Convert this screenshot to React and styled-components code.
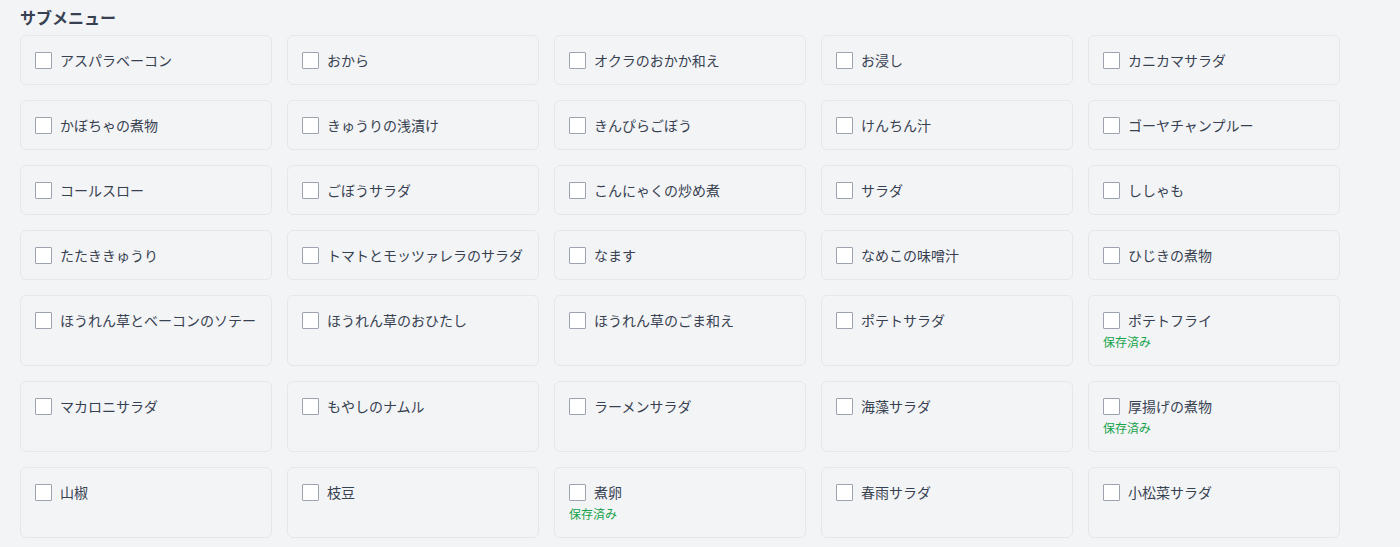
import React from "react";
import styled, { createGlobalStyle } from "styled-components";

const GlobalStyle = createGlobalStyle`
  body {
    margin: 0;
    background: #f3f4f6;
    font-family: "Noto Sans CJK JP", "Noto Sans", sans-serif;
    color: #374151;
  }
`;

const items = [
  ["アスパラベーコン"],
  ["おから"],
  ["オクラのおかか和え"],
  ["お浸し"],
  ["カニカマサラダ"],
  ["かぼちゃの煮物"],
  ["きゅうりの浅漬け"],
  ["きんぴらごぼう"],
  ["けんちん汁"],
  ["ゴーヤチャンプルー"],
  ["コールスロー"],
  ["ごぼうサラダ"],
  ["こんにゃくの炒め煮"],
  ["サラダ"],
  ["ししゃも"],
  ["たたききゅうり"],
  ["トマトとモッツァレラのサラダ"],
  ["なます"],
  ["なめこの味噌汁"],
  ["ひじきの煮物"],
  ["ほうれん草とベーコンのソテー"],
  ["ほうれん草のおひたし"],
  ["ほうれん草のごま和え"],
  ["ポテトサラダ"],
  ["ポテトフライ", true],
  ["マカロニサラダ"],
  ["もやしのナムル"],
  ["ラーメンサラダ"],
  ["海藻サラダ"],
  ["厚揚げの煮物", true],
  ["山椒"],
  ["枝豆"],
  ["煮卵", true],
  ["春雨サラダ"],
  ["小松菜サラダ"],
];

function App() {
  return (
    <>
      <GlobalStyle />
      <Page>
        <Title>サブメニュー</Title>
        <Grid>
          {items.map(([name, saved]) => (
            <Card key={name}>
              <Row>
                <Box type="checkbox" />
                <Name>{name}</Name>
              </Row>
              {saved && <Saved>保存済み</Saved>}
            </Card>
          ))}
        </Grid>
      </Page>
    </>
  );
}

export default App;

const Page = styled.div`
  padding: 5px 20px 8px;
  width: 1320px;
`;

const Title = styled.h2`
  margin: 0 0 6px;
  font-size: 16px;
  line-height: 24px;
  font-weight: 700;
  color: #374151;
`;

const Grid = styled.div`
  display: grid;
  grid-template-columns: repeat(5, 1fr);
  gap: 15px;
`;

const Card = styled.label`
  display: flex;
  flex-direction: column;
  border: 1px solid #e5e7eb;
  border-radius: 6px;
  padding: 15px 14px;
  min-height: 18px;
  cursor: pointer;
`;

const Row = styled.div`
  display: flex;
  align-items: center;
  gap: 8px;
  height: 18px;
`;

const Box = styled.input`
  appearance: none;
  margin: 0;
  width: 17px;
  height: 17px;
  flex-shrink: 0;
  background: #fff;
  border: 1px solid #9ca3af;
  border-radius: 1px;
`;

const Name = styled.span`
  font-size: 14px;
  line-height: 18px;
  color: #374151;
  white-space: nowrap;
`;

const Saved = styled.span`
  margin-top: 5px;
  font-size: 12px;
  line-height: 16px;
  color: #16a34a;
`;
